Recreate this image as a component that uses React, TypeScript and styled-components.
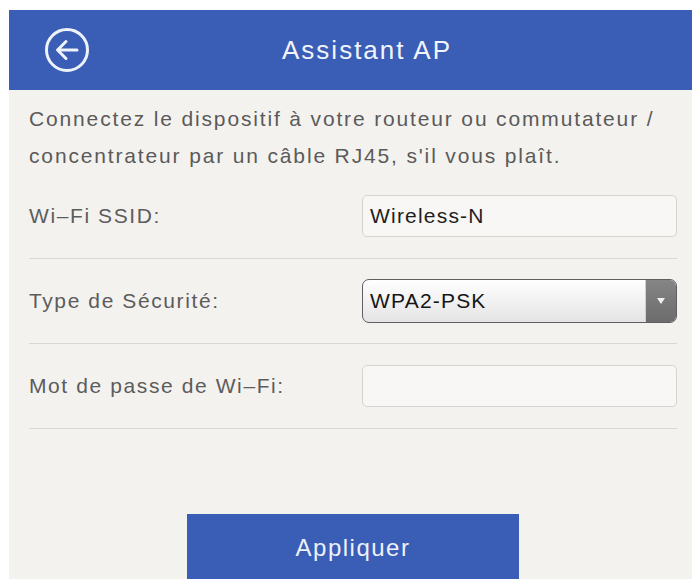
import React from "react";
import styled, { createGlobalStyle } from "styled-components";

const Global = createGlobalStyle`
  html, body { margin: 0; padding: 0; background: #ffffff; }
  body { font-family: "Liberation Sans", Arial, sans-serif; }
  * { box-sizing: border-box; }
`;

const Page = styled.div`
  width: 696px;
  height: 579px;
  overflow: hidden;
  padding: 10px 4px 0 9px;
  display: flex;
  flex-direction: column;
`;

const Header = styled.header`
  height: 80px;
  flex: none;
  background: #3a5db6;
  display: grid;
  grid-template-columns: 80px 1fr 82px;
  align-items: center;
  padding-left: 35px;
`;

const BackButton = styled.button`
  width: 46px;
  height: 46px;
  padding: 0;
  border: none;
  background: transparent;
  display: flex;
  align-items: center;
  justify-content: center;
`;

const Title = styled.h1`
  margin: 0;
  text-align: center;
  color: #f2f4fb;
  font-weight: 400;
  font-size: 26px;
  letter-spacing: 2px;
`;

const Body = styled.main`
  flex: 1;
  background: #f4f2ef;
  padding: 10px 15px 0 20px;
  display: flex;
  flex-direction: column;
`;

const Intro = styled.p`
  margin: 0;
  font-size: 21px;
  line-height: 37px;
  letter-spacing: 1.85px;
  color: #5a5a5a;
  white-space: nowrap;
`;

const Row = styled.div`
  height: 85px;
  display: grid;
  grid-template-columns: 1fr 315px;
  align-items: center;
  border-bottom: 1px solid #d9d7d4;
`;

const Label = styled.label`
  font-size: 21px;
  letter-spacing: 1.6px;
  color: #5c5c5c;
`;

const Field = styled.div`
  height: 42px;
  border: 1px solid #d6d4d1;
  border-radius: 5px;
  background: #f8f7f5;
  display: flex;
  align-items: center;
  padding-left: 7px;
  font-size: 21px;
  letter-spacing: 1.2px;
  color: #1e1e1e;
`;

const Select = styled.div`
  height: 44px;
  border: 1px solid #5f5f5f;
  border-radius: 7px;
  background: linear-gradient(#ffffff, #e4e4e4);
  display: flex;
  align-items: center;
  overflow: hidden;
  font-size: 21px;
  letter-spacing: 1.2px;
  color: #151515;
`;

const SelectValue = styled.span`
  flex: 1;
  padding-left: 7px;
`;

const SelectArrow = styled.span`
  width: 31px;
  align-self: stretch;
  background: linear-gradient(#858585, #6c6c6c);
  border-left: 1px solid #d0d0d0;
  display: flex;
  align-items: center;
  justify-content: center;
`;

const Triangle = styled.span`
  width: 0;
  height: 0;
  border-left: 4px solid transparent;
  border-right: 4px solid transparent;
  border-top: 6px solid #f2f2f2;
`;

const Apply = styled.button`
  align-self: center;
  margin-top: 85px;
  width: 332px;
  height: 68px;
  flex: none;
  border: none;
  background: #3a5db6;
  color: #eef1fa;
  font-family: "Liberation Sans", Arial, sans-serif;
  font-size: 24px;
  letter-spacing: 1.5px;
`;

function BackIcon() {
  return (
    <svg width="46" height="46" viewBox="0 0 46 46" fill="none">
      <circle cx="23" cy="23" r="20.5" stroke="#eef2fb" strokeWidth="3" />
      <path
        d="M33 23H14M22 14.5L13.5 23L22 31.5"
        stroke="#eef2fb"
        strokeWidth="3"
        strokeLinecap="round"
        strokeLinejoin="round"
      />
    </svg>
  );
}

export default function App() {
  return (
    <>
      <Global />
      <Page>
        <Header>
          <BackButton aria-label="Retour">
            <BackIcon />
          </BackButton>
          <Title>Assistant AP</Title>
          <span />
        </Header>
        <Body>
          <Intro>
            Connectez le dispositif à votre routeur ou commutateur /
            <br />
            concentrateur par un câble RJ45, s'il vous plaît.
          </Intro>
          <Row>
            <Label>Wi–Fi SSID:</Label>
            <Field>Wireless-N</Field>
          </Row>
          <Row>
            <Label>Type de Sécurité:</Label>
            <Select>
              <SelectValue>WPA2-PSK</SelectValue>
              <SelectArrow>
                <Triangle />
              </SelectArrow>
            </Select>
          </Row>
          <Row>
            <Label>Mot de passe de Wi–Fi:</Label>
            <Field />
          </Row>
          <Apply>Appliquer</Apply>
        </Body>
      </Page>
    </>
  );
}
